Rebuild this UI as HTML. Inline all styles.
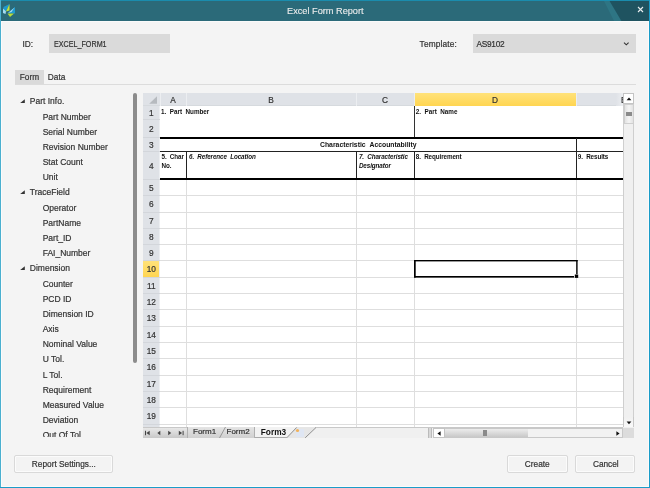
<!DOCTYPE html><html><head><meta charset="utf-8"><style>
html,body{margin:0;padding:0;width:650px;height:488px;overflow:hidden;background:#f4f4f4}
.t{position:absolute;white-space:pre;font-family:"Liberation Sans",sans-serif;-webkit-text-stroke:0.2px currentColor;filter:grayscale(1)}
.r{position:absolute}
</style></head><body>
<div class="r" style="left:0px;top:0px;width:650px;height:488px;background:#f4f4f4;"></div>
<div class="r" style="left:0px;top:0px;width:650px;height:21px;background:#2b6a79;"></div>
<svg class="r" style="left:0;top:0" width="650" height="21"><polygon points="604,1 609.6,1 621.5,21 614,21" fill="#2e7584"/><polygon points="609.6,1 650,1 650,21 621.5,21" fill="#1f5360"/></svg>
<div class="r" style="left:1px;top:21px;width:1px;height:466px;background:#fbfbfb;"></div>
<div class="r" style="left:648px;top:21px;width:1px;height:466px;background:#fbfbfb;"></div>
<div class="r" style="left:1px;top:486px;width:648px;height:1px;background:#fbfbfb;"></div>
<div class="r" style="left:0px;top:21px;width:650px;height:1px;background:#fafafa;"></div>
<div class="r" style="left:0px;top:0px;width:650px;height:1px;background:#1a8cad;"></div>
<div class="r" style="left:0px;top:0px;width:1px;height:488px;background:#4ab0d0;"></div>
<div class="r" style="left:649px;top:0px;width:1px;height:488px;background:#1a9cc8;"></div>
<div class="r" style="left:0px;top:487px;width:650px;height:1px;background:#1a9cc8;"></div>
<svg class="r" style="left:0px;top:0px" width="20" height="20" viewBox="0 0 20 20"><polygon points="3.5,7 9.5,4 6,11.5 3,13" fill="#1e9ad0"/><polygon points="3,8.5 6,11.5 5.5,14 3,13" fill="#a8dcf0"/><polygon points="9.5,4 6,11.5 9.5,10.5" fill="#c6e23a"/><polygon points="15,7 15,13.5 8,13 12,9.5" fill="#1e9ad0"/><polygon points="14.5,7.5 8,13 11.5,12" fill="#a8dcf0"/><polygon points="7.5,13.5 14,13.5 10,17" fill="#b8dc3a"/></svg>
<div class="t" style="left:287.00px;top:6.51px;font-size:9.2px;line-height:9.2px;color:#e6eef0;font-weight:normal;letter-spacing:0px;font-style:normal;-webkit-text-stroke:0.1px currentColor;">Excel Form Report</div>
<svg class="r" style="left:637px;top:6px" width="7" height="7"><path d="M1,1 L6,6 M6,1 L1,6" stroke="#e8eef0" stroke-width="1.1"/></svg>
<div class="t" style="left:22.50px;top:39.97px;font-size:8.3px;line-height:8.3px;color:#333;font-weight:normal;letter-spacing:0px;font-style:normal;">ID:</div>
<div class="r" style="left:49px;top:34px;width:121px;height:19px;background:#dadada;"></div>
<div class="t" style="left:53.90px;top:39.97px;font-size:8.3px;line-height:8.3px;color:#333;font-weight:normal;letter-spacing:0px;font-style:normal;transform:scaleX(0.864);transform-origin:0 0;">EXCEL_FORM1</div>
<div class="t" style="left:419.60px;top:39.97px;font-size:8.3px;line-height:8.3px;color:#333;font-weight:normal;letter-spacing:0.15px;font-style:normal;">Template:</div>
<div class="r" style="left:473px;top:34px;width:163px;height:19px;background:#dadada;"></div>
<div class="t" style="left:476.40px;top:39.97px;font-size:8.3px;line-height:8.3px;color:#333;font-weight:normal;letter-spacing:-0.25px;font-style:normal;">AS9102</div>
<svg class="r" style="left:623px;top:41px" width="7" height="5"><path d="M1,1.6 L3.3,3.8 L5.6,1.6" stroke="#333" stroke-width="1.1" fill="none"/></svg>
<div class="r" style="left:15px;top:70px;width:29px;height:14px;background:#dadada;"></div>
<div class="t" style="left:19.80px;top:72.77px;font-size:8.3px;line-height:8.3px;color:#333;font-weight:normal;letter-spacing:0px;font-style:normal;">Form</div>
<div class="t" style="left:47.80px;top:72.77px;font-size:8.3px;line-height:8.3px;color:#333;font-weight:normal;letter-spacing:0px;font-style:normal;">Data</div>
<div class="r" style="left:15px;top:84px;width:621px;height:1px;background:#dcdcdc;"></div>
<div class="r" style="left:15px;top:90px;width:115px;height:347px;overflow:hidden">
<svg class="r" style="left:5px;top:9.30px" width="5" height="5"><polygon points="4.8,0.3 4.8,3.9 0.2,3.9" fill="#333"/></svg>
<div class="t" style="left:14.80px;top:7.40px;font-size:8.5px;line-height:8.5px;color:#333;font-weight:normal;letter-spacing:0px;font-style:normal;">Part Info.</div>
<div class="t" style="left:27.70px;top:22.58px;font-size:8.5px;line-height:8.5px;color:#333;font-weight:normal;letter-spacing:0px;font-style:normal;">Part Number</div>
<div class="t" style="left:27.70px;top:37.76px;font-size:8.5px;line-height:8.5px;color:#333;font-weight:normal;letter-spacing:0px;font-style:normal;">Serial Number</div>
<div class="t" style="left:27.70px;top:52.94px;font-size:8.5px;line-height:8.5px;color:#333;font-weight:normal;letter-spacing:0px;font-style:normal;">Revision Number</div>
<div class="t" style="left:27.70px;top:68.12px;font-size:8.5px;line-height:8.5px;color:#333;font-weight:normal;letter-spacing:0px;font-style:normal;">Stat Count</div>
<div class="t" style="left:27.70px;top:83.30px;font-size:8.5px;line-height:8.5px;color:#333;font-weight:normal;letter-spacing:0px;font-style:normal;">Unit</div>
<svg class="r" style="left:5px;top:100.38px" width="5" height="5"><polygon points="4.8,0.3 4.8,3.9 0.2,3.9" fill="#333"/></svg>
<div class="t" style="left:14.80px;top:98.48px;font-size:8.5px;line-height:8.5px;color:#333;font-weight:normal;letter-spacing:0px;font-style:normal;">TraceField</div>
<div class="t" style="left:27.70px;top:113.66px;font-size:8.5px;line-height:8.5px;color:#333;font-weight:normal;letter-spacing:0px;font-style:normal;">Operator</div>
<div class="t" style="left:27.70px;top:128.84px;font-size:8.5px;line-height:8.5px;color:#333;font-weight:normal;letter-spacing:0px;font-style:normal;">PartName</div>
<div class="t" style="left:27.70px;top:144.02px;font-size:8.5px;line-height:8.5px;color:#333;font-weight:normal;letter-spacing:0px;font-style:normal;">Part_ID</div>
<div class="t" style="left:27.70px;top:159.20px;font-size:8.5px;line-height:8.5px;color:#333;font-weight:normal;letter-spacing:0px;font-style:normal;">FAI_Number</div>
<svg class="r" style="left:5px;top:176.28px" width="5" height="5"><polygon points="4.8,0.3 4.8,3.9 0.2,3.9" fill="#333"/></svg>
<div class="t" style="left:14.80px;top:174.38px;font-size:8.5px;line-height:8.5px;color:#333;font-weight:normal;letter-spacing:0px;font-style:normal;">Dimension</div>
<div class="t" style="left:27.70px;top:189.56px;font-size:8.5px;line-height:8.5px;color:#333;font-weight:normal;letter-spacing:0px;font-style:normal;">Counter</div>
<div class="t" style="left:27.70px;top:204.74px;font-size:8.5px;line-height:8.5px;color:#333;font-weight:normal;letter-spacing:0px;font-style:normal;">PCD ID</div>
<div class="t" style="left:27.70px;top:219.92px;font-size:8.5px;line-height:8.5px;color:#333;font-weight:normal;letter-spacing:0px;font-style:normal;">Dimension ID</div>
<div class="t" style="left:27.70px;top:235.10px;font-size:8.5px;line-height:8.5px;color:#333;font-weight:normal;letter-spacing:0px;font-style:normal;">Axis</div>
<div class="t" style="left:27.70px;top:250.28px;font-size:8.5px;line-height:8.5px;color:#333;font-weight:normal;letter-spacing:0px;font-style:normal;">Nominal Value</div>
<div class="t" style="left:27.70px;top:265.46px;font-size:8.5px;line-height:8.5px;color:#333;font-weight:normal;letter-spacing:0px;font-style:normal;">U Tol.</div>
<div class="t" style="left:27.70px;top:280.64px;font-size:8.5px;line-height:8.5px;color:#333;font-weight:normal;letter-spacing:0px;font-style:normal;">L Tol.</div>
<div class="t" style="left:27.70px;top:295.82px;font-size:8.5px;line-height:8.5px;color:#333;font-weight:normal;letter-spacing:0px;font-style:normal;">Requirement</div>
<div class="t" style="left:27.70px;top:311.00px;font-size:8.5px;line-height:8.5px;color:#333;font-weight:normal;letter-spacing:0px;font-style:normal;">Measured Value</div>
<div class="t" style="left:27.70px;top:326.18px;font-size:8.5px;line-height:8.5px;color:#333;font-weight:normal;letter-spacing:0px;font-style:normal;">Deviation</div>
<div class="t" style="left:27.70px;top:341.36px;font-size:8.5px;line-height:8.5px;color:#333;font-weight:normal;letter-spacing:0px;font-style:normal;">Out Of Tol.</div>
</div>
<div class="r" style="left:133px;top:93px;width:4px;height:270px;background:#8c8c8c;border-radius:2px;"></div>
<div class="r" style="left:143px;top:93px;width:491px;height:345px;background:#fff;overflow:hidden">
<div class="r" style="left:0px;top:0px;width:480px;height:13px;background:#dfe2e7;"></div>
<div class="r" style="left:0px;top:12px;width:480px;height:1px;background:#d6dade;"></div>
<div class="r" style="left:272px;top:0px;width:161px;height:13px;background:linear-gradient(#ffe27a,#ffd551);"></div>
<div class="r" style="left:17px;top:0px;width:1px;height:13px;background:#eceef1;"></div>
<div class="r" style="left:43px;top:0px;width:1px;height:13px;background:#eceef1;"></div>
<div class="r" style="left:213px;top:0px;width:1px;height:13px;background:#eceef1;"></div>
<div class="r" style="left:271px;top:0px;width:1px;height:13px;background:#eceef1;"></div>
<div class="r" style="left:433px;top:0px;width:1px;height:13px;background:#eceef1;"></div>
<div class="r" style="left:0px;top:13px;width:17px;height:332px;background:#dfe2e7;"></div>
<div class="r" style="left:16px;top:13px;width:1px;height:321px;background:#eceef1;"></div>
<div class="r" style="left:0px;top:26px;width:17px;height:1px;background:#d3d6db;"></div>
<div class="r" style="left:0px;top:44px;width:17px;height:1px;background:#d3d6db;"></div>
<div class="r" style="left:0px;top:58px;width:17px;height:1px;background:#d3d6db;"></div>
<div class="r" style="left:0px;top:86px;width:17px;height:1px;background:#d3d6db;"></div>
<div class="r" style="left:0px;top:102px;width:17px;height:1px;background:#d3d6db;"></div>
<div class="r" style="left:0px;top:119px;width:17px;height:1px;background:#d3d6db;"></div>
<div class="r" style="left:0px;top:135px;width:17px;height:1px;background:#d3d6db;"></div>
<div class="r" style="left:0px;top:151px;width:17px;height:1px;background:#d3d6db;"></div>
<div class="r" style="left:0px;top:167px;width:17px;height:1px;background:#d3d6db;"></div>
<div class="r" style="left:0px;top:184px;width:17px;height:1px;background:#d3d6db;"></div>
<div class="r" style="left:0px;top:200px;width:17px;height:1px;background:#d3d6db;"></div>
<div class="r" style="left:0px;top:216px;width:17px;height:1px;background:#d3d6db;"></div>
<div class="r" style="left:0px;top:233px;width:17px;height:1px;background:#d3d6db;"></div>
<div class="r" style="left:0px;top:249px;width:17px;height:1px;background:#d3d6db;"></div>
<div class="r" style="left:0px;top:265px;width:17px;height:1px;background:#d3d6db;"></div>
<div class="r" style="left:0px;top:282px;width:17px;height:1px;background:#d3d6db;"></div>
<div class="r" style="left:0px;top:298px;width:17px;height:1px;background:#d3d6db;"></div>
<div class="r" style="left:0px;top:314px;width:17px;height:1px;background:#d3d6db;"></div>
<div class="r" style="left:0px;top:331px;width:17px;height:1px;background:#d3d6db;"></div>
<div class="r" style="left:0px;top:347px;width:17px;height:1px;background:#d3d6db;"></div>
<svg class="r" style="left:5px;top:2px" width="11" height="11"><polygon points="9,1.3 9,8.7 1.2,8.7" fill="#b6babf"/></svg>
<div class="r" style="left:0px;top:168px;width:16px;height:16px;background:linear-gradient(#ffe27a,#ffd551);"></div>
<div class="t" style="left:10.00px;width:40px;text-align:center;top:2.77px;font-size:8.3px;line-height:8.3px;color:#333;font-weight:normal;letter-spacing:0px;font-style:normal;">A</div>
<div class="t" style="left:108.00px;width:40px;text-align:center;top:2.77px;font-size:8.3px;line-height:8.3px;color:#333;font-weight:normal;letter-spacing:0px;font-style:normal;">B</div>
<div class="t" style="left:222.00px;width:40px;text-align:center;top:2.77px;font-size:8.3px;line-height:8.3px;color:#333;font-weight:normal;letter-spacing:0px;font-style:normal;">C</div>
<div class="t" style="left:332.00px;width:40px;text-align:center;top:2.77px;font-size:8.3px;line-height:8.3px;color:#333;font-weight:normal;letter-spacing:0px;font-style:normal;">D</div>
<div class="r" style="left:473px;top:0px;width:7px;height:13px;background:linear-gradient(90deg,#dfe2e7,#eceef1);"></div>
<div class="t" style="left:478.00px;top:2.77px;font-size:8.3px;line-height:8.3px;color:#333;font-weight:normal;letter-spacing:0px;font-style:normal;">E</div>
<div class="t" style="left:-0.20px;width:17px;text-align:center;top:15.67px;font-size:8.3px;line-height:8.3px;color:#333;font-weight:normal;letter-spacing:0px;font-style:normal;">1</div>
<div class="t" style="left:-0.20px;width:17px;text-align:center;top:31.77px;font-size:8.3px;line-height:8.3px;color:#333;font-weight:normal;letter-spacing:0px;font-style:normal;">2</div>
<div class="t" style="left:-0.20px;width:17px;text-align:center;top:47.77px;font-size:8.3px;line-height:8.3px;color:#333;font-weight:normal;letter-spacing:0px;font-style:normal;">3</div>
<div class="t" style="left:-0.20px;width:17px;text-align:center;top:68.77px;font-size:8.3px;line-height:8.3px;color:#333;font-weight:normal;letter-spacing:0px;font-style:normal;">4</div>
<div class="t" style="left:-0.20px;width:17px;text-align:center;top:90.77px;font-size:8.3px;line-height:8.3px;color:#333;font-weight:normal;letter-spacing:0px;font-style:normal;">5</div>
<div class="t" style="left:-0.20px;width:17px;text-align:center;top:107.27px;font-size:8.3px;line-height:8.3px;color:#333;font-weight:normal;letter-spacing:0px;font-style:normal;">6</div>
<div class="t" style="left:-0.20px;width:17px;text-align:center;top:123.77px;font-size:8.3px;line-height:8.3px;color:#333;font-weight:normal;letter-spacing:0px;font-style:normal;">7</div>
<div class="t" style="left:-0.20px;width:17px;text-align:center;top:139.77px;font-size:8.3px;line-height:8.3px;color:#333;font-weight:normal;letter-spacing:0px;font-style:normal;">8</div>
<div class="t" style="left:-0.20px;width:17px;text-align:center;top:155.77px;font-size:8.3px;line-height:8.3px;color:#333;font-weight:normal;letter-spacing:0px;font-style:normal;">9</div>
<div class="t" style="left:-0.20px;width:17px;text-align:center;top:172.27px;font-size:8.3px;line-height:8.3px;color:#333;font-weight:normal;letter-spacing:0px;font-style:normal;">10</div>
<div class="t" style="left:-0.20px;width:17px;text-align:center;top:188.77px;font-size:8.3px;line-height:8.3px;color:#333;font-weight:normal;letter-spacing:0px;font-style:normal;">11</div>
<div class="t" style="left:-0.20px;width:17px;text-align:center;top:204.77px;font-size:8.3px;line-height:8.3px;color:#333;font-weight:normal;letter-spacing:0px;font-style:normal;">12</div>
<div class="t" style="left:-0.20px;width:17px;text-align:center;top:221.27px;font-size:8.3px;line-height:8.3px;color:#333;font-weight:normal;letter-spacing:0px;font-style:normal;">13</div>
<div class="t" style="left:-0.20px;width:17px;text-align:center;top:237.77px;font-size:8.3px;line-height:8.3px;color:#333;font-weight:normal;letter-spacing:0px;font-style:normal;">14</div>
<div class="t" style="left:-0.20px;width:17px;text-align:center;top:253.77px;font-size:8.3px;line-height:8.3px;color:#333;font-weight:normal;letter-spacing:0px;font-style:normal;">15</div>
<div class="t" style="left:-0.20px;width:17px;text-align:center;top:270.27px;font-size:8.3px;line-height:8.3px;color:#333;font-weight:normal;letter-spacing:0px;font-style:normal;">16</div>
<div class="t" style="left:-0.20px;width:17px;text-align:center;top:286.77px;font-size:8.3px;line-height:8.3px;color:#333;font-weight:normal;letter-spacing:0px;font-style:normal;">17</div>
<div class="t" style="left:-0.20px;width:17px;text-align:center;top:302.77px;font-size:8.3px;line-height:8.3px;color:#333;font-weight:normal;letter-spacing:0px;font-style:normal;">18</div>
<div class="t" style="left:-0.20px;width:17px;text-align:center;top:319.27px;font-size:8.3px;line-height:8.3px;color:#333;font-weight:normal;letter-spacing:0px;font-style:normal;">19</div>
<div class="t" style="left:-0.20px;width:17px;text-align:center;top:335.77px;font-size:8.3px;line-height:8.3px;color:#333;font-weight:normal;letter-spacing:0px;font-style:normal;">20</div>
<div class="r" style="left:17px;top:102px;width:463px;height:1px;background:#dedede;"></div>
<div class="r" style="left:17px;top:119px;width:463px;height:1px;background:#dedede;"></div>
<div class="r" style="left:17px;top:135px;width:463px;height:1px;background:#dedede;"></div>
<div class="r" style="left:17px;top:151px;width:463px;height:1px;background:#dedede;"></div>
<div class="r" style="left:17px;top:167px;width:463px;height:1px;background:#dedede;"></div>
<div class="r" style="left:17px;top:184px;width:463px;height:1px;background:#dedede;"></div>
<div class="r" style="left:17px;top:200px;width:463px;height:1px;background:#dedede;"></div>
<div class="r" style="left:17px;top:216px;width:463px;height:1px;background:#dedede;"></div>
<div class="r" style="left:17px;top:233px;width:463px;height:1px;background:#dedede;"></div>
<div class="r" style="left:17px;top:249px;width:463px;height:1px;background:#dedede;"></div>
<div class="r" style="left:17px;top:265px;width:463px;height:1px;background:#dedede;"></div>
<div class="r" style="left:17px;top:282px;width:463px;height:1px;background:#dedede;"></div>
<div class="r" style="left:17px;top:298px;width:463px;height:1px;background:#dedede;"></div>
<div class="r" style="left:17px;top:314px;width:463px;height:1px;background:#dedede;"></div>
<div class="r" style="left:17px;top:331px;width:463px;height:1px;background:#dedede;"></div>
<div class="r" style="left:17px;top:347px;width:463px;height:1px;background:#dedede;"></div>
<div class="r" style="left:43px;top:86px;width:1px;height:259px;background:#dedede;"></div>
<div class="r" style="left:213px;top:86px;width:1px;height:259px;background:#dedede;"></div>
<div class="r" style="left:271px;top:86px;width:1px;height:259px;background:#dedede;"></div>
<div class="r" style="left:433px;top:86px;width:1px;height:259px;background:#dedede;"></div>
<div class="r" style="left:271px;top:13px;width:1px;height:31px;background:#333;"></div>
<div class="r" style="left:17px;top:44px;width:463px;height:1.6px;background:#000;"></div>
<div class="r" style="left:433px;top:45px;width:1px;height:41px;background:#222;"></div>
<div class="r" style="left:17px;top:58px;width:463px;height:1px;background:#222;"></div>
<div class="r" style="left:43px;top:59px;width:1px;height:27px;background:#222;"></div>
<div class="r" style="left:213px;top:59px;width:1px;height:27px;background:#222;"></div>
<div class="r" style="left:271px;top:59px;width:1px;height:27px;background:#222;"></div>
<div class="r" style="left:17px;top:85px;width:463px;height:2px;background:#000;"></div>
<div class="t" style="left:18.00px;top:16.27px;font-size:6.3px;line-height:6.3px;color:#111;font-weight:bold;letter-spacing:0px;font-style:normal;-webkit-text-stroke:0;">1.&#160;&#160;Part&#160;&#160;Number</div>
<div class="t" style="left:272.80px;top:16.27px;font-size:6.3px;line-height:6.3px;color:#111;font-weight:bold;letter-spacing:0px;font-style:normal;-webkit-text-stroke:0;">2.&#160;&#160;Part&#160;&#160;Name</div>
<div class="t" style="left:155.30px;width:140px;text-align:center;top:48.70px;font-size:6.85px;line-height:6.85px;color:#111;font-weight:bold;letter-spacing:0px;font-style:normal;-webkit-text-stroke:0;">Characteristic&#160;&#160;Accountability</div>
<div class="t" style="left:18.50px;top:61.27px;font-size:6.3px;line-height:6.3px;color:#111;font-weight:bold;letter-spacing:-0.1px;font-style:normal;-webkit-text-stroke:0;">5.&#160;&#160;Char</div>
<div class="t" style="left:18.50px;top:70.07px;font-size:6.3px;line-height:6.3px;color:#111;font-weight:bold;letter-spacing:-0.1px;font-style:normal;-webkit-text-stroke:0;">No.</div>
<div class="t" style="left:46.00px;top:61.27px;font-size:6.3px;line-height:6.3px;color:#111;font-weight:bold;letter-spacing:-0.1px;font-style:italic;-webkit-text-stroke:0;">6.&#160;&#160;Reference&#160;&#160;Location</div>
<div class="t" style="left:215.90px;top:61.27px;font-size:6.3px;line-height:6.3px;color:#111;font-weight:bold;letter-spacing:-0.1px;font-style:italic;-webkit-text-stroke:0;">7.&#160;&#160;Characteristic</div>
<div class="t" style="left:215.90px;top:69.87px;font-size:6.3px;line-height:6.3px;color:#111;font-weight:bold;letter-spacing:-0.1px;font-style:italic;-webkit-text-stroke:0;">Designator</div>
<div class="t" style="left:272.80px;top:61.27px;font-size:6.3px;line-height:6.3px;color:#111;font-weight:bold;letter-spacing:-0.1px;font-style:normal;-webkit-text-stroke:0;">8.&#160;&#160;Requirement</div>
<div class="t" style="left:434.80px;top:61.27px;font-size:6.3px;line-height:6.3px;color:#111;font-weight:bold;letter-spacing:-0.1px;font-style:normal;-webkit-text-stroke:0;">9.&#160;&#160;Results</div>
<svg class="r" style="left:271px;top:167px" width="165" height="20"><rect x="0" y="0" width="163.6" height="1.4" fill="#000"/><rect x="0" y="0" width="1.7" height="17.6" fill="#000"/><rect x="0" y="16" width="160" height="1.6" fill="#000"/><rect x="162.2" y="0" width="1.4" height="14" fill="#000"/><rect x="160.8" y="14.5" width="3.4" height="3.4" fill="#000"/></svg>
<div class="r" style="left:480px;top:0px;width:11px;height:335px;background:#f0f0f0;border-left:1px solid #cfcfcf;border-right:1px solid #cfcfcf;box-sizing:border-box;"></div>
<div class="r" style="left:480px;top:0px;width:11px;height:11px;background:#fff;border:1px solid #c4c4c4;box-sizing:border-box;"></div>
<svg class="r" style="left:483px;top:4px" width="6" height="4"><polygon points="3,0.6 5.4,3.2 0.6,3.2" fill="#111"/></svg>
<div class="r" style="left:481px;top:11px;width:10px;height:20px;background:linear-gradient(90deg,#e2e2e2,#f4f4f4 50%,#e2e2e2);border:1px solid #cfcfcf;box-sizing:border-box;"></div>
<div class="r" style="left:483px;top:19px;width:6px;height:4px;background:#8a8a8a;"></div>
<div class="r" style="left:480px;top:324px;width:11px;height:11px;background:linear-gradient(#f0f0f0,#fafafa);border:1px solid #c8c8c8;border-top:none;box-sizing:border-box;"></div>
<svg class="r" style="left:483px;top:328px" width="6" height="4"><polygon points="0.6,0.6 5.4,0.6 3,3.2" fill="#111"/></svg>
<div class="r" style="left:0px;top:334px;width:491px;height:11px;background:#f0f0f0;"></div>
<div class="r" style="left:0px;top:334px;width:480px;height:1px;background:#c8c8c8;"></div>
<div class="r" style="left:0px;top:335px;width:44px;height:10px;background:linear-gradient(#e8e8e8,#c8c8c8);"></div>
<svg class="r" style="left:0px;top:335px" width="46" height="10"><rect x="2" y="2.8" width="1" height="4.4" fill="#444"/><polygon points="6.7,2.8 6.7,7.2 3.4,5" fill="#444"/><polygon points="17.3,2.8 17.3,7.2 14.3,5" fill="#444"/><polygon points="25.2,2.8 25.2,7.2 28.2,5" fill="#444"/><polygon points="35.8,2.8 35.8,7.2 39.1,5" fill="#444"/><rect x="39.6" y="2.8" width="1" height="4.4" fill="#444"/></svg>
<svg class="r" style="left:44px;top:334px" width="200" height="11"><defs><linearGradient id="tg" x1="0" y1="0" x2="0" y2="1"><stop offset="0" stop-color="#e4e4e4"/><stop offset="1" stop-color="#d0d0d0"/></linearGradient></defs><polygon points="0,0 0,11 76,11 76,0" fill="url(#tg)"/><line x1="0.5" y1="0" x2="0.5" y2="11" stroke="#b0b0b0" stroke-width="1"/><line x1="32.5" y1="11" x2="38.5" y2="0" stroke="#888" stroke-width="0.8"/><line x1="67.5" y1="0" x2="67.5" y2="11" stroke="#b0b0b0" stroke-width="1"/><polygon points="68,0 68,11 99.8,11 109.6,0" fill="#f2f2f2"/><polygon points="99.8,11 109.6,0 129,0 118.2,11" fill="#e6e6e6"/><line x1="99.8" y1="10.8" x2="109.6" y2="0.5" stroke="#777" stroke-width="0.8"/><line x1="118.2" y1="10.8" x2="129" y2="0.5" stroke="#777" stroke-width="0.8"/><line x1="68" y1="10.5" x2="100" y2="10.5" stroke="#aaa" stroke-width="1"/><rect x="109" y="2" width="8" height="8" rx="1" fill="#dfe6f3"/><circle cx="110.5" cy="3.5" r="1.6" fill="#f2b25a"/></svg>
<div class="t" style="left:50.00px;top:335.23px;font-size:8px;line-height:8px;color:#333;font-weight:normal;letter-spacing:0px;font-style:normal;">Form1</div>
<div class="t" style="left:83.50px;top:335.23px;font-size:8px;line-height:8px;color:#333;font-weight:normal;letter-spacing:0px;font-style:normal;">Form2</div>
<div class="t" style="left:117.80px;top:334.97px;font-size:8.3px;line-height:8.3px;color:#111;font-weight:bold;letter-spacing:0px;font-style:normal;-webkit-text-stroke:0;">Form3</div>
<div class="r" style="left:285px;top:335px;width:4px;height:10px;background:#d8d8d8;border-left:1px solid #bbb;border-right:1px solid #bbb;box-sizing:border-box;"></div>
<div class="r" style="left:290px;top:335px;width:190px;height:10px;background:#f2f2f2;border:1px solid #c8c8c8;box-sizing:border-box;"></div>
<div class="r" style="left:290px;top:335px;width:12px;height:10px;background:#fff;border:1px solid #c4c4c4;box-sizing:border-box;"></div>
<svg class="r" style="left:294px;top:338px" width="5" height="6"><polygon points="3.6,0.2 3.6,4.8 0.4,2.5" fill="#111"/></svg>
<div class="r" style="left:302px;top:336px;width:83px;height:8px;background:linear-gradient(#ececec,#c8c8c8);"></div>
<div class="r" style="left:340px;top:337px;width:4px;height:6px;background:#8a8a8a;"></div>
<svg class="r" style="left:473px;top:338px" width="5" height="6"><polygon points="0.4,0.2 0.4,4.8 3.6,2.5" fill="#111"/></svg>
<div class="r" style="left:480px;top:335px;width:11px;height:10px;background:#dcdcdc;"></div>
</div>
<div class="r" style="left:14px;top:455px;width:99px;height:18px;background:#f3f3f3;border:1px solid #d9d9d9;box-sizing:border-box;border-radius:2px;box-shadow:inset 0 0 0 1px #fbfbfb;"></div>
<div class="t" style="left:31.80px;top:460.17px;font-size:8.3px;line-height:8.3px;color:#333;font-weight:normal;letter-spacing:0px;font-style:normal;">Report Settings...</div>
<div class="r" style="left:507px;top:455px;width:61px;height:18px;background:#f3f3f3;border:1px solid #d9d9d9;box-sizing:border-box;border-radius:2px;box-shadow:inset 0 0 0 1px #fbfbfb;"></div>
<div class="t" style="left:524.80px;top:460.17px;font-size:8.3px;line-height:8.3px;color:#333;font-weight:normal;letter-spacing:0px;font-style:normal;">Create</div>
<div class="r" style="left:575px;top:455px;width:60px;height:18px;background:#f3f3f3;border:1px solid #d9d9d9;box-sizing:border-box;border-radius:2px;box-shadow:inset 0 0 0 1px #fbfbfb;"></div>
<div class="t" style="left:592.90px;top:460.17px;font-size:8.3px;line-height:8.3px;color:#333;font-weight:normal;letter-spacing:0px;font-style:normal;">Cancel</div>
</body></html>
